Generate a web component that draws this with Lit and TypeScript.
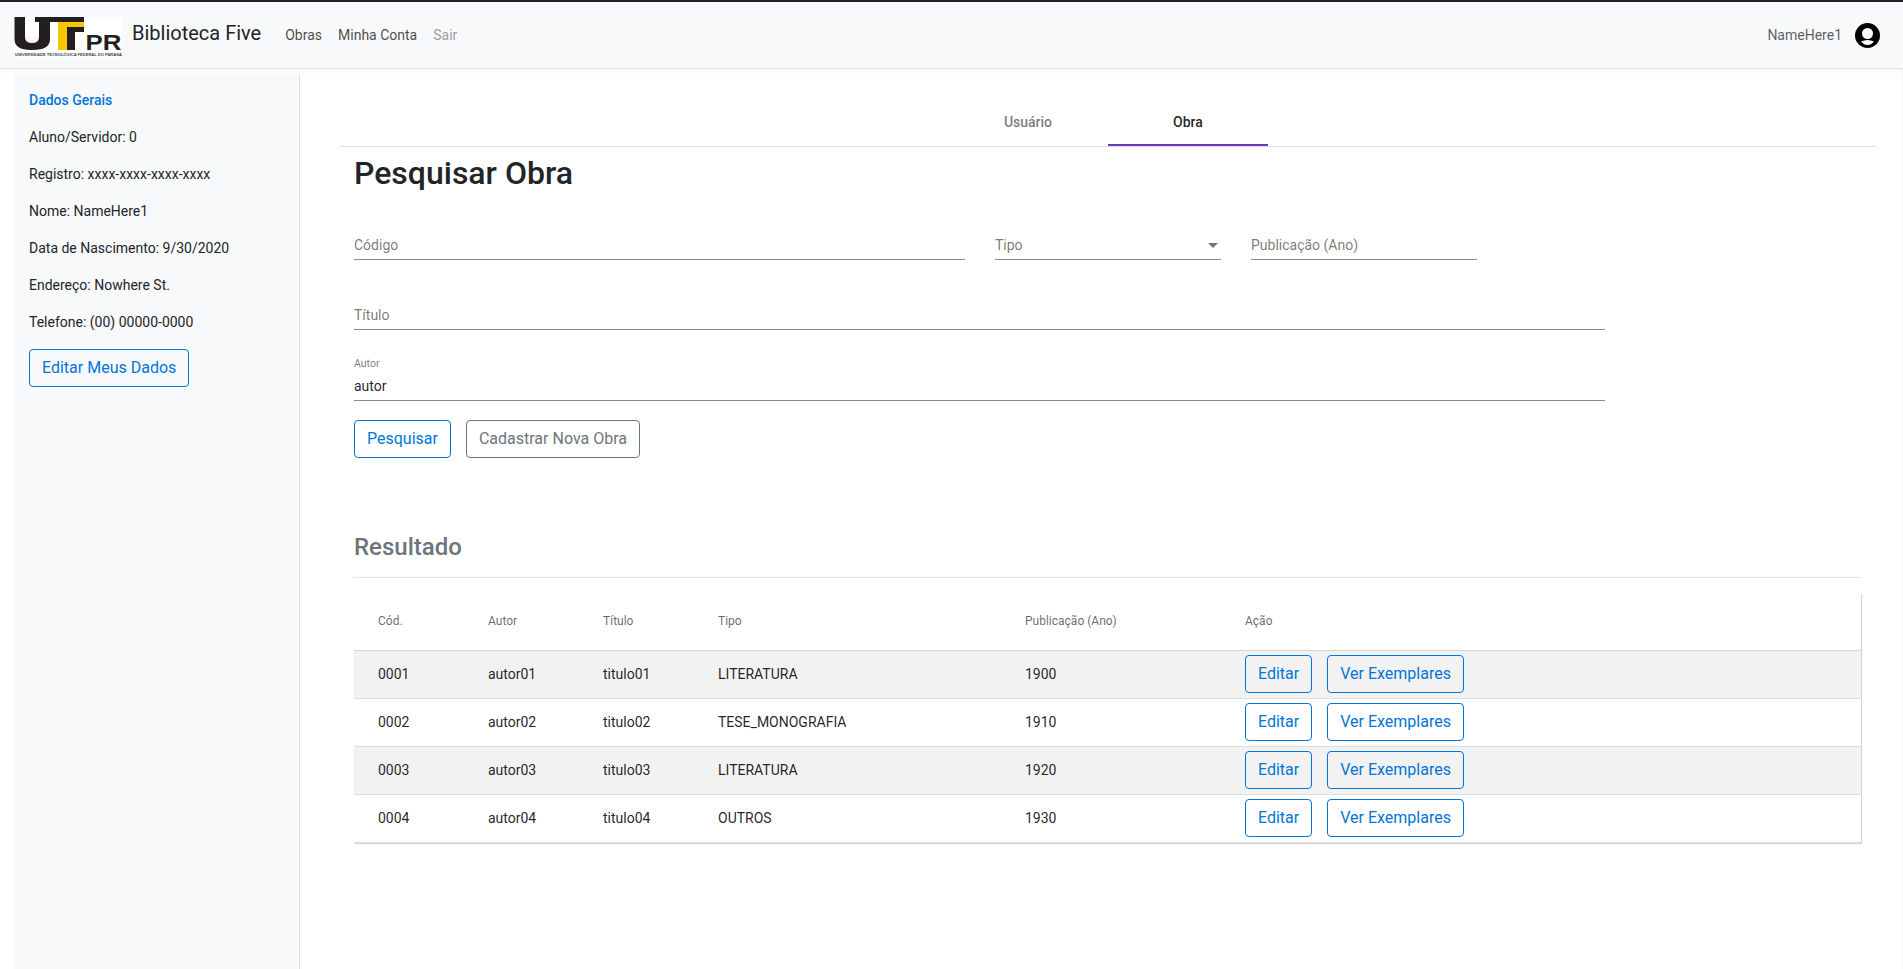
import { LitElement, html, css } from "lit";
import { customElement } from "lit/decorators.js";

const sideRows = [
  "Aluno/Servidor: 0",
  "Registro: xxxx-xxxx-xxxx-xxxx",
  "Nome: NameHere1",
  "Data de Nascimento: 9/30/2020",
  "Endereço: Nowhere St.",
  "Telefone: (00) 00000-0000",
];

const obras = [
  ["0001", "autor01", "titulo01", "LITERATURA", "1900"],
  ["0002", "autor02", "titulo02", "TESE_MONOGRAFIA", "1910"],
  ["0003", "autor03", "titulo03", "LITERATURA", "1920"],
  ["0004", "autor04", "titulo04", "OUTROS", "1930"],
];

@customElement("app-root")
export class AppRoot extends LitElement {
  static override styles = css`
    :host {
      display: flex;
      flex-direction: column;
      min-height: 100vh;
      font-family: Roboto, "Liberation Sans", sans-serif;
      font-size: 14px;
      line-height: 21px;
      color: #212529;
      background: #fff;
    }
    * {
      box-sizing: border-box;
    }
    .navbar {
      position: relative;
      display: flex;
      align-items: center;
      height: 69px;
      padding: 0 23px 0 14px;
      background: #f8f9fa;
      border-top: 2px solid #212529;
      border-bottom: 1px solid #dee2e6;
      box-shadow: 0 2px 6px rgba(0, 0, 0, 0.04);
    }
    .logo {
      display: block;
      margin-top: 3px;
      overflow: visible;
    }
    .brand {
      margin-left: 10px;
      font-size: 20px;
      line-height: 30px;
      margin-top: -4px;
    }
    .links {
      display: flex;
      gap: 16px;
      margin-left: 24px;
      color: rgba(0, 0, 0, 0.72);
    }
    .links .off {
      color: rgba(0, 0, 0, 0.4);
    }
    .user {
      display: flex;
      align-items: center;
      gap: 13px;
      margin-left: auto;
      color: rgba(0, 0, 0, 0.65);
    }
    .user svg {
      display: block;
    }
    .page {
      display: flex;
      flex: 1;
      padding-left: 14px;
      border-right: 1px solid #f5f5f5;
    }
    .side {
      width: 286px;
      margin-top: 5px;
      padding: 16px 15px;
      background: #f8f9fa;
      border-right: 1px solid #dee2e6;
    }
    .side p {
      margin: 0 0 16px;
    }
    .side .head {
      color: #0275d8;
      font-weight: 500;
    }
    .btn {
      display: inline-block;
      padding: 0 12px;
      height: 38px;
      font-size: 16px;
      line-height: 36px;
      color: #0275d8;
      background: transparent;
      border: 1px solid #0275d8;
      border-radius: 4px;
    }
    .btn.gray {
      color: #6c757d;
      border-color: #6c757d;
    }
    .main {
      flex: 1;
      padding: 29px 26px 0 40px;
    }
    .tabs {
      display: flex;
      justify-content: center;
      border-bottom: 1px solid rgba(0, 0, 0, 0.12);
    }
    .tab {
      width: 160px;
      height: 48px;
      line-height: 48px;
      text-align: center;
      font-weight: 500;
      color: rgba(0, 0, 0, 0.54);
    }
    .tab.on {
      color: rgba(0, 0, 0, 0.87);
      border-bottom: 2px solid #673ab7;
    }
    .content {
      padding: 0 15px 0 14px;
    }
    h2 {
      margin: 0;
      padding-top: 7px;
      font-size: 32px;
      line-height: 38px;
      font-weight: 500;
    }
    .row {
      display: grid;
      grid-template-columns: 611px 226px 226px;
      gap: 30px;
      margin-top: 12px;
    }
    .wide {
      width: 1251px;
      margin-top: 14px;
    }
    .wide.tight {
      margin-top: 15px;
    }
    .field {
      position: relative;
      display: flex;
      align-items: flex-end;
      justify-content: space-between;
      height: 56px;
      padding-bottom: 3px;
      line-height: 21px;
      color: rgba(0, 0, 0, 0.54);
      border-bottom: 1px solid rgba(0, 0, 0, 0.46);
    }
    .field .small {
      position: absolute;
      left: 0;
      top: 12px;
      font-size: 10.5px;
      line-height: 14px;
    }
    .field .value {
      color: rgba(0, 0, 0, 0.87);
    }
    .arrow {
      width: 0;
      height: 0;
      margin: 0 3px 8px 0;
      border-left: 5px solid transparent;
      border-right: 5px solid transparent;
      border-top: 5px solid rgba(0, 0, 0, 0.54);
    }
    .actions {
      display: flex;
      gap: 15px;
      margin-top: 19px;
    }
    h3 {
      margin: 0;
      padding: 71px 0 12px;
      font-size: 24px;
      line-height: 36px;
      font-weight: 500;
      color: #6c757d;
      border-bottom: 1px solid #dee2e6;
    }
    table {
      width: 100%;
      margin-top: 15px;
      border-collapse: collapse;
      table-layout: fixed;
      box-shadow: 1px 1px 1px rgba(0, 0, 0, 0.16);
    }
    th {
      height: 57px;
      padding: 0 0 0 24px;
      text-align: left;
      font-size: 12px;
      font-weight: 400;
      color: rgba(0, 0, 0, 0.6);
      border-bottom: 1px solid #d6d6d6;
    }
    td {
      height: 48px;
      padding: 0 0 0 24px;
      color: rgba(0, 0, 0, 0.87);
      border-bottom: 1px solid #dedede;
    }
    tbody tr:nth-child(odd) {
      background: #f2f2f2;
    }
    .cell-actions {
      display: flex;
      gap: 15px;
    }
  `;

  override render() {
    return html`
      <nav class="navbar">
        ${this.renderLogo()}
        <span class="brand">Biblioteca Five</span>
        <div class="links">
          <span>Obras</span>
          <span>Minha Conta</span>
          <span class="off">Sair</span>
        </div>
        <div class="user">
          <span>NameHere1</span>
          <svg width="25" height="25" viewBox="0 0 25 25">
            <circle cx="12.5" cy="12.5" r="12.5" fill="#000" />
            <circle cx="12.5" cy="10.5" r="5.5" fill="#fff" />
            <path d="M6 18.5 Q12.5 15.5 19 18.5 Q16 22 12.5 22 Q9 22 6 18.5Z" fill="#fff" />
          </svg>
        </div>
      </nav>
      <div class="page">
        <aside class="side">
          <p class="head">Dados Gerais</p>
          ${sideRows.map((r) => html`<p>${r}</p>`)}
          <span class="btn">Editar Meus Dados</span>
        </aside>
        <main class="main">
          <div class="tabs">
            <div class="tab">Usuário</div>
            <div class="tab on">Obra</div>
          </div>
          <div class="content">
            <h2>Pesquisar Obra</h2>
            <div class="row">
              <div class="field">Código</div>
              <div class="field">Tipo<span class="arrow"></span></div>
              <div class="field">Publicação (Ano)</div>
            </div>
            <div class="wide"><div class="field">Título</div></div>
            <div class="wide tight">
              <div class="field">
                <span class="small">Autor</span>
                <span class="value">autor</span>
              </div>
            </div>
            <div class="actions">
              <span class="btn">Pesquisar</span>
              <span class="btn gray">Cadastrar Nova Obra</span>
            </div>
            <h3>Resultado</h3>
            <table>
              <colgroup>
                <col style="width:110px" />
                <col style="width:115px" />
                <col style="width:115px" />
                <col style="width:307px" />
                <col style="width:220px" />
                <col />
              </colgroup>
              <thead>
                <tr>
                  <th>Cód.</th>
                  <th>Autor</th>
                  <th>Título</th>
                  <th>Tipo</th>
                  <th>Publicação (Ano)</th>
                  <th>Ação</th>
                </tr>
              </thead>
              <tbody>
                ${obras.map(
                  (o) => html`
                    <tr>
                      ${o.map((c) => html`<td>${c}</td>`)}
                      <td>
                        <div class="cell-actions">
                          <span class="btn">Editar</span>
                          <span class="btn">Ver Exemplares</span>
                        </div>
                      </td>
                    </tr>
                  `
                )}
              </tbody>
            </table>
          </div>
        </main>
      </div>
    `;
  }

  // logo marks are plain shapes, only PR and the caption are text
  private renderLogo() {
    return html`
      <svg class="logo" width="108" height="40" viewBox="14 15 108 40">
        <rect x="14" y="15" width="108" height="40" fill="#fff" />
        <path d="M14.5 15H25V35Q25 41 32 41Q39 41 39 35V20H35V15H58V20H50V37Q50 48 33 48H31Q14.5 48 14.5 37Z" fill="#231f20" />
        <path d="M58 20H84V25H67V48H58Z" fill="#f7c600" />
        <rect x="58" y="15" width="26" height="5" fill="#231f20" />
        <path d="M67 25H84V30H75V48H67Z" fill="#231f20" />
        <text x="85.5" y="48" font-family="Liberation Sans, sans-serif" font-weight="700" font-size="22" fill="#231f20" textLength="36" lengthAdjust="spacingAndGlyphs">PR</text>
        <text x="15" y="53.6" font-family="Liberation Sans, sans-serif" font-weight="700" font-size="4.4" fill="#444" textLength="107" lengthAdjust="spacingAndGlyphs">UNIVERSIDADE TECNOLÓGICA FEDERAL DO PARANÁ</text>
      </svg>
    `;
  }
}
